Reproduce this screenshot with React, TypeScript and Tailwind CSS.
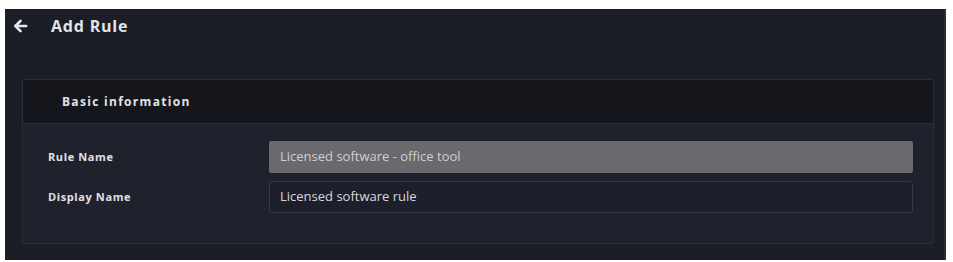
import React from 'react';

export default function App() {
  return (
    <div className="w-[953px] h-[262px] bg-white pt-[9px] pl-[5px] pr-[7px] pb-[2px]" style={{ fontFamily: '"Open Sans", "Liberation Sans", sans-serif' }}>
      <div className="h-full bg-[#1b1e27] border-r-2 border-[#2a2d36] flex flex-col">
        {/* Header */}
        <div className="flex items-center h-[22px] mt-[6px] pl-[8px]">
          <svg width="15" height="14" viewBox="0 0 16 14" className="text-[#e8e8ea]">
            <path d="M8 1.5 L2.5 7 L8 12.5 M3 7 H14" stroke="currentColor" strokeWidth="2.8" fill="none" strokeLinecap="round" strokeLinejoin="round" />
          </svg>
          <h1 className="ml-[23px] text-[16px] font-bold text-[#e4e4e8] tracking-[0.8px]">Add Rule</h1>
        </div>

        {/* Card */}
        <div className="mt-[42px] ml-[17px] w-[912px] h-[165px] bg-[#1f222d] border border-[#2a2e39] rounded-[2px] flex flex-col">
          <div className="h-[44px] bg-[#14161b] border-b border-[#2c2f3a] flex items-center pl-[39px]">
            <span className="text-[12px] font-bold text-[#e2e2e6] tracking-[1.3px]">Basic information</span>
          </div>
          <div className="flex flex-col gap-[8px] pt-[17px] pl-[25px] pr-[20px]">
            <div className="flex items-center">
              <label className="w-[221px] text-[11px] font-bold text-[#e0e0e4] tracking-[0.6px]">Rule Name</label>
              <div className="flex-1 h-[32px] bg-[#6a696d] rounded-[2px] flex items-center pl-[11px] text-[13px] text-[#cfcfd2]">
                Licensed software - office tool
              </div>
            </div>
            <div className="flex items-center">
              <label className="w-[221px] text-[11px] font-bold text-[#e0e0e4] tracking-[0.6px]">Display Name</label>
              <div className="flex-1 h-[32px] bg-[#1d202c] border border-[#363a47] rounded-[3px] flex items-center pl-[10px] text-[13px] text-[#d8d8dc]">
                Licensed software rule
              </div>
            </div>
          </div>
        </div>
      </div>
    </div>
  );
}
